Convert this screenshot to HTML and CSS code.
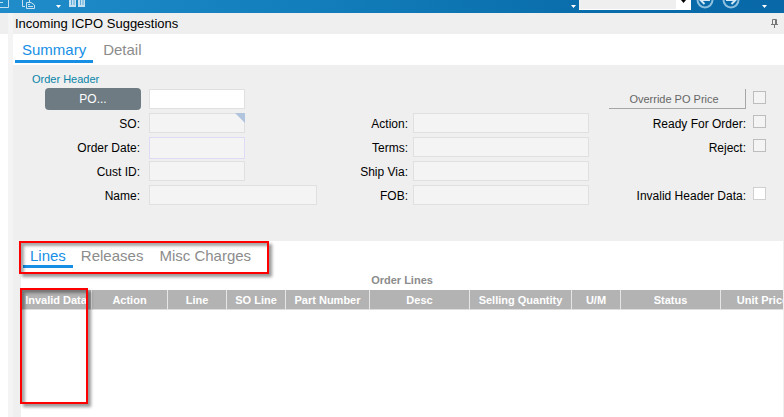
FILE: index.html
```html
<!DOCTYPE html>
<html lang="en">
<head>
<meta charset="utf-8">
<title>Incoming ICPO Suggestions</title>
<link rel="stylesheet" href="styles.css">
</head>
<body>
<header class="toolbar">
  <div class="tools">
    <svg width="94" height="13" viewBox="0 0 94 13" aria-hidden="true">
      <path d="M0 7.500H8.500V0M0 2.500H3" class="line"/>
      <path d="M22.500 0V6.500H25M29.500 0V3M26.500 2.500H31L34.500 5V8.500H26.500ZM28 6.500H33M28 4.500H30" class="line"/>
      <path d="M56 5h5l-2.500 3z" class="solid"/>
      <path d="M69 0H76V7H69ZM78 0H85V7H78Z" class="book"/>
      <path d="M71.500 0V5M74 0V5M80.500 0V5M83 0V5" class="spine"/>
    </svg>
  </div>
  <div class="nav">
    <svg width="8" height="13" viewBox="0 0 8 13" aria-hidden="true"><path d="M0 5h5l-2.500 3z" class="solid"/></svg>
    <div class="picker"><span class="picker-arrow"><svg width="15" height="9" viewBox="0 0 15 9" aria-hidden="true"><path d="M5 0h5l-2.500 3z"/></svg></span></div>
    <svg width="93" height="13" viewBox="0 0 93 13" aria-hidden="true">
      <circle cx="14" cy="0" r="7.500" class="ring"/><circle cx="40" cy="0" r="7.500" class="ring"/>
      <path d="M9.500 0H19M13.500 -4L9.500 0L13.500 4M35 0H44.500M40.500 -4L44.500 0L40.500 4" class="arrow"/>
      <path d="M71 5h5l-2.500 3z" class="solid"/>
    </svg>
  </div>
</header>
<div class="shell">
  <div class="side"></div>
  <main class="window">
    <div class="titlebar">
      <h1>Incoming ICPO Suggestions</h1>
      <svg width="7" height="9" viewBox="0 0 7 9" aria-hidden="true"><path d="M1.500 5V.5H5.500V5M0 5.500H7M3.500 6V9M4.500 1V5" class="pin"/></svg>
    </div>
    <nav class="tabs">
      <a href="#summary" class="tab active">Summary</a>
      <a href="#detail" class="tab">Detail</a>
    </nav>
    <section class="order">
      <h2>Order Header</h2>
      <form class="fields">
        <div class="group first">
          <button type="button" class="po">PO...</button><input aria-label="PO" class="short open">
          <label for="so">SO:</label><div class="lookup short"><input id="so" readonly></div>
          <label for="date">Order Date:</label><input id="date" class="short date" readonly>
          <label for="cust">Cust ID:</label><input id="cust" class="short" readonly>
          <label for="name">Name:</label><input id="name" readonly>
        </div>
        <div class="group second">
          <label for="action">Action:</label><input id="action" readonly>
          <label for="terms">Terms:</label><input id="terms" readonly>
          <label for="via">Ship Via:</label><input id="via" readonly>
          <label for="fob">FOB:</label><input id="fob" readonly>
        </div>
        <div class="group third">
          <button type="button" class="override">Override PO Price</button><input type="checkbox" aria-label="Override PO Price">
          <label for="ready">Ready For Order:</label><input type="checkbox" id="ready">
          <label for="reject">Reject:</label><input type="checkbox" id="reject">
          <label for="invalid" class="last">Invalid Header Data:</label><input type="checkbox" id="invalid" class="open last">
        </div>
      </form>
    </section>
    <section class="lines">
      <nav class="tabs lower">
        <a href="#lines" class="tab active">Lines</a>
        <a href="#releases" class="tab">Releases</a>
        <a href="#misc" class="tab">Misc Charges</a>
        <span class="mark mark-tabs"></span>
      </nav>
      <div class="grid">
        <h2>Order Lines</h2>
        <div class="scroll">
          <table>
            <colgroup><col class="w71"><col class="w76"><col class="w59"><col class="w59"><col class="w84"><col class="w100"><col class="w102"><col class="w49"><col class="w100"><col class="w84"></colgroup>
            <thead><tr><th>Invalid Data</th><th>Action</th><th>Line</th><th>SO Line</th><th>Part Number</th><th>Desc</th><th>Selling Quantity</th><th>U/M</th><th>Status</th><th>Unit Price</th></tr></thead>
          </table>
        </div>
        <span class="mark mark-column"></span>
      </div>
    </section>
  </main>
</div>
</body>
</html>
```
FILE: styles.css
```css
* { box-sizing: border-box; }
body {
  margin: 0;
  min-height: 100vh;
  display: flex;
  flex-direction: column;
  overflow: hidden;
  background: #fff;
  color: #000;
  font-family: "Liberation Sans", Arial, sans-serif;
  font-size: 12px;
}
h1, h2 { margin: 0; font-weight: normal; }
svg { display: block; }

.toolbar {
  height: 13px;
  display: flex;
  justify-content: space-between;
  overflow: hidden;
  background: linear-gradient(90deg, #208dca, #1380bd 35%, #0a6dab 75%, #0868a8);
}
.line { fill: none; stroke: #c5e1f1; }
.book { fill: #c5e1f1; }
.spine { fill: none; stroke: #5fabd6; }
.solid { fill: #fff; }
.ring { fill: none; stroke: #8fc0df; stroke-width: 2; }
.arrow { fill: none; stroke: #d5eaf6; stroke-width: 2; }
.nav { display: flex; }
.picker {
  width: 112px;
  height: 10px;
  display: flex;
  justify-content: flex-end;
  background: #efefef;
  border-bottom: 1px solid #fff;
}
.picker-arrow { background: #fff; }

.shell { flex: 1; display: flex; }
.side { width: 8px; border-top: 21px solid #efefef; background: #fff; }
.window {
  flex: 1;
  min-width: 0;
  display: flex;
  flex-direction: column;
  border-left: 5px solid #f4f4f4;
  background: #efefef;
}
.titlebar {
  height: 21px;
  padding: 0 6px 0 2px;
  display: flex;
  align-items: center;
  justify-content: space-between;
}
.titlebar h1 { font-size: 13px; line-height: 21px; }
.pin { fill: none; stroke: #777; }

.tabs { display: flex; height: 31px; padding-left: 2px; background: #fff; }
.tab {
  height: 29px;
  padding: 0 7px;
  border-bottom: 3px solid transparent;
  color: #8c8c8c;
  font-size: 15px;
  line-height: 32px;
  text-decoration: none;
}
.tab + .tab { padding: 0 10px; }
.tab.active { color: #168fe5; border-color: #168fe5; }

.order { height: 176px; padding: 8px 18px 0 19px; }
.order h2 { color: #0884a8; font-size: 11px; line-height: 13px; }
.fields {
  display: grid;
  grid-template-columns: 285px 1fr 157px;
  margin-top: 2px;
}
.group {
  display: grid;
  grid-auto-rows: 24px;
  align-items: start;
  padding-bottom: 8px;
}
.first { grid-template-columns: 109px 168px; column-gap: 8px; }
.second { grid-template-columns: 91px 1fr; column-gap: 5px; margin-right: 20px; padding-top: 24px; }
.third { grid-template-columns: 1fr 13px; column-gap: 7px; }
label { line-height: 22px; text-align: right; white-space: nowrap; }
.first input, .second input {
  width: 100%;
  height: 20px;
  margin: 1px 0 0;
  padding: 0 3px;
  border: 1px solid #e0e0e0;
  border-radius: 0;
  background: #f4f4f4;
  font: inherit;
}
.first .short { width: 96px; }
.first .open { background: #fff; }
.first .date { height: 22px; border-color: #dedcf5; }
.first label { padding-right: 1px; }
.first label, .second label { padding-top: 1px; }
.lookup { position: relative; }
.lookup::after {
  content: "";
  position: absolute;
  top: 1px;
  right: 0;
  border: 5px solid #b0c4de;
  border-left-color: transparent;
  border-bottom-color: transparent;
}
.po {
  height: 22px;
  margin-left: 13px;
  padding: 0;
  border: 0;
  border-radius: 4px;
  background: #6e7b83;
  color: #fff;
  font: inherit;
}
.override {
  width: 137px;
  height: 20px;
  margin-top: 1px;
  padding: 0 6px 0 0;
  border: solid #a6a6a6;
  border-width: 0 1px 1px 0;
  background: transparent;
  color: #666;
  font: inherit;
  font-size: 11px;
}
.third input {
  appearance: none;
  width: 13px;
  height: 13px;
  margin: 3px 0 0;
  border: 1px solid #bdbdbd;
  background: #f4f4f4;
}
.third input.open { background: #fff; border-color: #d0d0d0; }
.third label { line-height: 24px; justify-self: end; }
.third .last { grid-row: 5; }

.lines {
  flex: 1;
  display: flex;
  flex-direction: column;
  margin: 0 1px 0 8px;
  background: #fff;
}
.lower { position: relative; }
.lower .tab { height: 27px; line-height: 30px; }
.lower .tab + .tab { padding: 0 8px; }
.grid { position: relative; flex: 1; }
.grid h2 {
  color: #8c8c8c;
  font-size: 11px;
  font-weight: bold;
  line-height: 16px;
  padding-bottom: 2px;
  text-align: center;
}
.scroll { overflow: hidden; }
table { width: 784px; table-layout: fixed; border-collapse: separate; border-spacing: 0; }
th {
  height: 20px;
  padding: 1px 0 0;
  background: #b3b3b3;
  border-right: 1px solid #e6e6e6;
  border-bottom: 1px solid #ddd;
  color: #fff;
  font-size: 11px;
  line-height: 18px;
  white-space: nowrap;
}
.w49 { width: 49px; }
.w59 { width: 59px; }
.w71 { width: 71px; }
.w76 { width: 76px; }
.w84 { width: 84px; }
.w100 { width: 100px; }
.w102 { width: 102px; }

.mark {
  position: absolute;
  border: 2px solid #f00;
  box-shadow: 3px 3px 3px rgba(0, 0, 0, .4), inset 3px 3px 3px rgba(0, 0, 0, .35);
  pointer-events: none;
}
.mark-tabs { left: -2px; top: 0; width: 250px; height: 33px; }
.mark-column { left: -1px; top: 16px; width: 68px; height: 116px; }
```
